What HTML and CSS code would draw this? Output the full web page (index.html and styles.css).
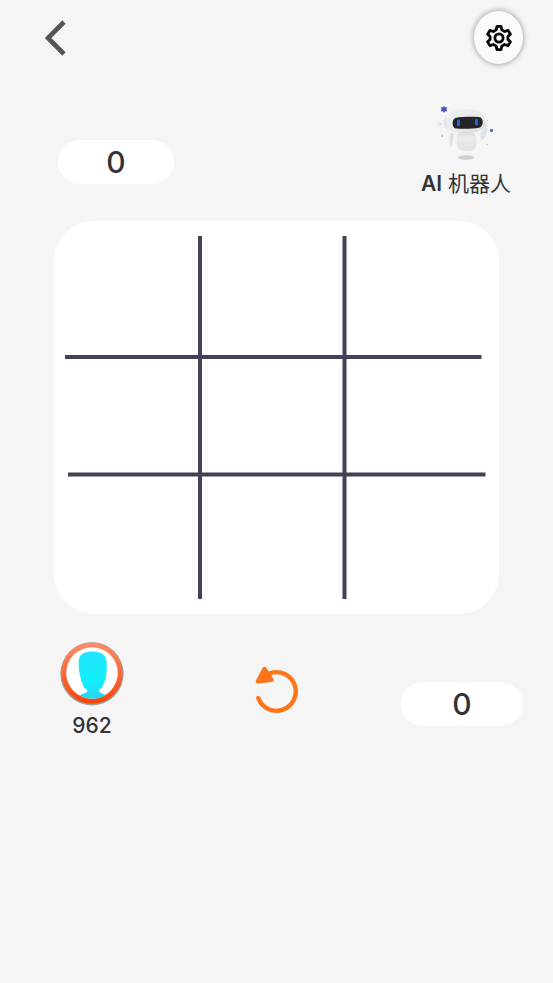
FILE: index.html
```html
<!DOCTYPE html>
<html lang="zh-CN">
<head>
<meta charset="utf-8">
<meta name="viewport" content="width=device-width, initial-scale=1">
<title>AI 机器人</title>
<link rel="stylesheet" href="styles.css">
</head>
<body>
<header class="topbar">
  <button class="icon-button" type="button" aria-label="返回">
    <svg width="22" height="36" viewBox="0 0 22 36" fill="none" stroke="#555" stroke-width="4.600"><path d="M20 2 4 18l16 16"/></svg>
  </button>
  <button class="icon-button settings" type="button" aria-label="设置">
    <svg width="30" height="30" viewBox="0 0 30 30" fill="none" stroke="#050505" stroke-width="2.800" stroke-linejoin="round"><path d="M13 3.400h4l.8 3.500 2.800 1.600 3.500-1.100 2.300 3.800-2.500 2.300v3l2.500 2.300-2.300 3.800-3.500-1.100-2.800 1.600-.8 3.500h-4l-.8-3.500-2.800-1.600-3.500 1.100-2.300-3.800 2.500-2.300v-3l-2.500-2.300 2.300-3.800 3.500 1.100 2.800-1.600z"/><circle cx="15" cy="15" r="4.100"/></svg>
  </button>
</header>
<main>
  <section class="row opponent">
    <output class="score">0</output>
    <div class="player">
      <svg width="64" height="60" viewBox="0 0 64 60">
        <defs>
          <linearGradient id="shell" x1="0" y1="0" x2="1" y2="1"><stop offset="0" stop-color="#eff0f1"/><stop offset=".55" stop-color="#e8eaec"/><stop offset="1" stop-color="#dadde0"/></linearGradient>
          <linearGradient id="torso" x1="0" y1="0" x2="0" y2="1"><stop offset="0" stop-color="#d8dadd"/><stop offset=".3" stop-color="#e9ebec"/><stop offset="1" stop-color="#e0e2e5"/></linearGradient>
        </defs>
        <ellipse cx="32" cy="53.500" rx="8.500" ry="2.200" fill="#cfcfcf"/>
        <path d="M16.500 29h3c0 6-.5 11-2.500 14-2-4-1.800-9-.5-14z" fill="#dfe2e5"/>
        <ellipse cx="13" cy="19" rx="3.500" ry="6.500" fill="#e4e7ea"/>
        <path d="M12.500 19C12.500 9 20 4.500 32 4.500S51 9 51 18c0 8-8 11.500-19 11.500S12.500 27 12.500 19z" fill="url(#shell)"/>
        <path d="M25 29c4-1.500 11-1.500 15 0 2.500 2 3 6 2.500 11 0 5-3 7-9.500 7S23.500 45 23 40c-.5-5-.5-9 2-11z" fill="url(#torso)"/>
        <path d="M47 37c4-2 7-7 6.500-13-.3-4-1.500-6.500-3.500-7 1 7-4 10-4 14 0 3 1 3 1 6z" fill="#e1e4e7"/>
        <path d="M22 13.800c6-1.200 16-1.200 23-.8 5 .5 5 9.500 0 10.700-6 1.300-16 1.300-23 .8-4.500-.5-4.500-10 0-10.700z" fill="#232427"/>
        <rect x="23" y="15.700" width="3" height="6.200" rx="1" fill="#1767e8"/>
        <rect x="41" y="15" width="3" height="6.200" rx="1" fill="#1767e8"/>
        <path d="m10 2.200 1 1.500 1.900-.2-.8 1.800.8 1.800-1.900-.2-1 1.500-1-1.500-1.900.2.8-1.800-.8-1.800 1.900.2z" fill="#4d4dc8" stroke="#4d4dc8" stroke-width=".6"/>
        <circle cx="57.500" cy="26.500" r="1.700" fill="#6268ca"/>
        <circle cx="5.500" cy="20" r="1.300" fill="none" stroke="#c8c9ea" stroke-width=".7"/>
        <circle cx="8" cy="32" r=".9" fill="#aeb0dc"/>
        <circle cx="53" cy="40.500" r=".8" fill="#b9bbe0"/>
        <circle cx="53.500" cy="16.500" r=".7" fill="#b9bbe0"/>
      </svg>
      <span class="name"><span class="latin">AI</span> 机器人</span>
    </div>
  </section>

  <section class="board">
    <button class="cell" type="button"></button><button class="cell" type="button"></button><button class="cell" type="button"></button>
    <button class="cell" type="button"></button><button class="cell" type="button"></button><button class="cell" type="button"></button>
    <button class="cell" type="button"></button><button class="cell" type="button"></button><button class="cell" type="button"></button>
    <svg class="lines" viewBox="0 0 445 393" stroke="#434255" stroke-width="4"><path d="M146 15v363M290.500 15v363M11 136h416.500M14 253.500h417.500"/></svg>
  </section>

  <section class="row self">
    <div class="player">
      <svg width="64" height="64" viewBox="0 0 64 64">
        <defs>
          <linearGradient id="ring" x1="0" y1="0" x2="0" y2="1"><stop offset="0" stop-color="#ff8c68"/><stop offset="1" stop-color="#f94408"/></linearGradient>
          <linearGradient id="person" x1="0" y1="0" x2="0" y2="1"><stop offset="0" stop-color="#24e5fb"/><stop offset=".6" stop-color="#12effc"/><stop offset="1" stop-color="#28d6f4"/></linearGradient>
        </defs>
        <circle cx="32" cy="31.800" r="31.600" fill="#777" opacity=".7"/>
        <circle cx="32" cy="31.200" r="30.600" fill="url(#ring)"/>
        <circle cx="32" cy="31" r="25.800" fill="#fff"/>
        <path d="M20 53.500c1.500-2 6.500-2 7-4 .5-1.500-.3-2.500-1.200-3-2 .2-2.300-1-2-2.700-1.300-.8-2-2-1.300-3.300-1.500-.5-1.700-2.500-1.900-4.500C18.500 28 18 20 19.500 15.500 21.500 10.700 27 9.500 32.500 9.500s10.500 1.200 13 6c2 5.500 1.500 13.500.3 20.500-.2 2-.9 4-2.300 5 .7 1 0 2.500-1.200 3 .5 1.500-.3 2.700-2 2.500-1 .7-1.300 1.500-.9 3 .5 2 4.600 2 6.100 4-7.500 4.300-17.500 4.300-25.500 0z" fill="url(#person)"/>
      </svg>
      <span class="name">962</span>
    </div>
    <button class="icon-button restart" type="button" aria-label="重新开始">
      <svg width="44" height="48" viewBox="0 0 44 48" fill="none" stroke="#fc7519" stroke-linecap="round" stroke-linejoin="round"><path stroke-width="4.400" d="M15 7.300A19.300 19.300 0 1 1 3.300 32"/><path d="M9.500 3 3 15.200l13.500-1.300z" fill="#fc7519" stroke-width="4.400"/></svg>
    </button>
    <output class="score score-self">0</output>
  </section>
</main>
</body>
</html>
```
FILE: styles.css
```css
* { box-sizing: border-box; }

body {
  margin: 0;
  min-height: 100vh;
  background: #f5f5f5;
  color: #333;
  font-family: Inter, "Noto Sans CJK SC", sans-serif;
  font-weight: 500;
}

svg { display: block; }

.icon-button {
  padding: 0;
  border: 0;
  background: none;
  cursor: pointer;
}

.topbar {
  display: flex;
  align-items: center;
  justify-content: space-between;
  padding: 11px 30px 0 44px;
}

.settings {
  display: grid;
  place-items: center;
  width: 49px;
  height: 53px;
  border-radius: 50%;
  background: #fafafa;
  box-shadow: 0 0 5px 1px #aaa;
}

.row { display: grid; }

.opponent {
  grid-template-columns: 1fr auto;
  padding: 0 42px 0 58px;
  margin-top: 40px;
}

.self {
  grid-template-columns: 1fr auto 1fr;
  padding: 0 30px;
  margin-top: 28px;
}

.self .player {
  justify-self: start;
  margin-left: 30px;
}

.player {
  display: flex;
  flex-direction: column;
  align-items: center;
  gap: 8px;
}

.name {
  font-size: 21px;
  line-height: 24px;
}

.opponent .name { font-weight: 400; }

.name .latin { font-weight: 600; }

.score {
  align-self: end;
  width: 116px;
  margin-bottom: 12px;
  border-radius: 40px;
  background: #fff;
  font-size: 30px;
  line-height: 44px;
  text-align: center;
}

.score-self {
  justify-self: end;
  width: 122px;
}

.restart {
  align-self: end;
  margin-bottom: 24px;
}

.board {
  position: relative;
  display: grid;
  grid-template: repeat(3, 1fr) / repeat(3, 1fr);
  aspect-ratio: 445 / 393;
  margin: 25px 54px 0;
  border-radius: 40px;
  background: #fff;
}

.cell {
  border: 0;
  background: none;
  cursor: pointer;
}

.lines {
  position: absolute;
  inset: 0;
  width: 100%;
  height: 100%;
  pointer-events: none;
}
```
